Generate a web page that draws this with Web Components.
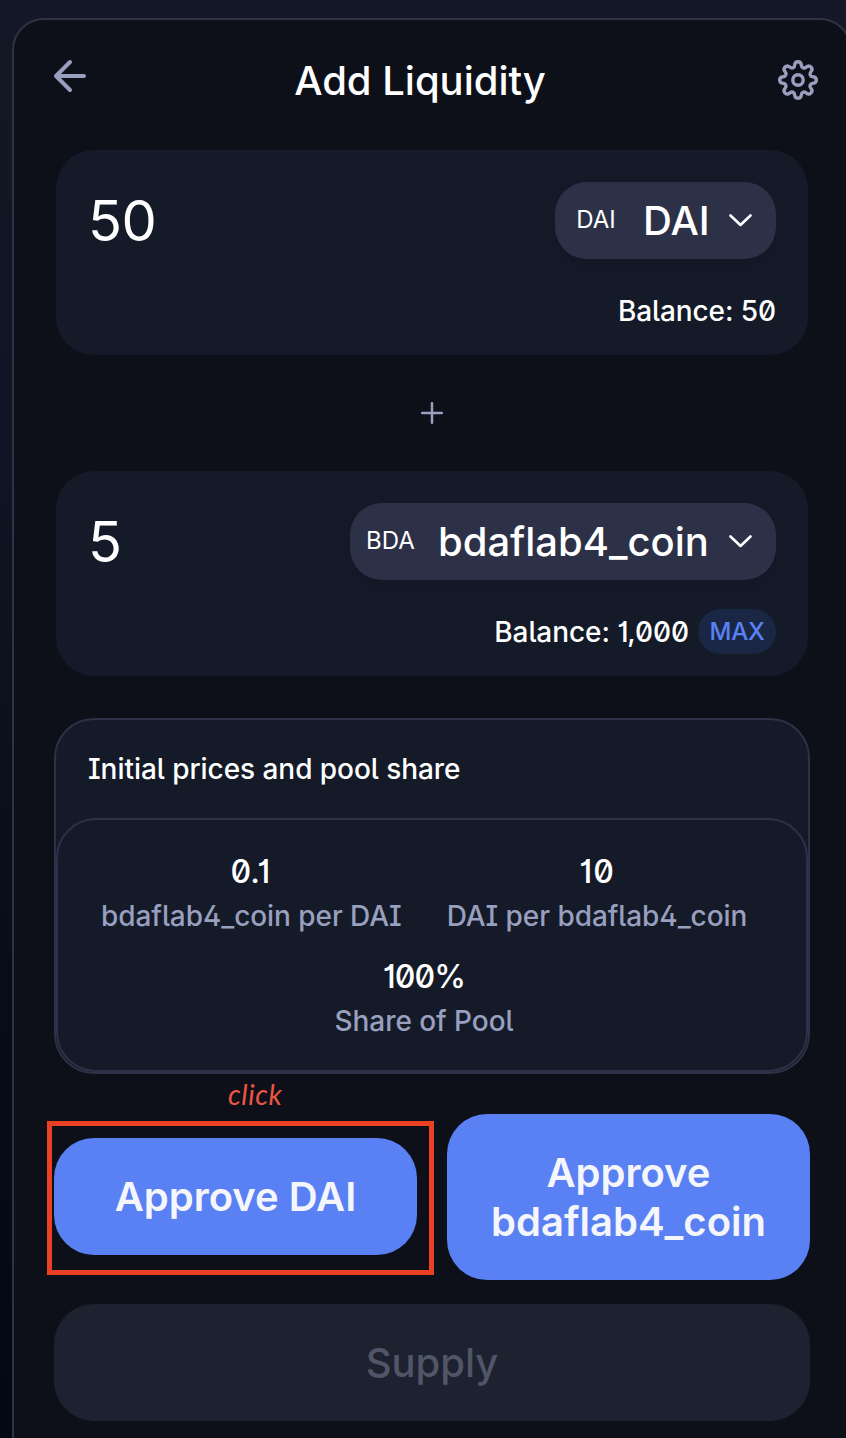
<!DOCTYPE html>
<html lang="en">
<head>
<meta charset="utf-8">
<title>Add Liquidity</title>
<style>
html,body{margin:0;height:1438px;overflow:hidden}
body{background:linear-gradient(180deg,#141726 0,#111424 30%,#080b18 70%,#040714 100%);font-family:Inter,"Liberation Sans",sans-serif;color:#fff;font-weight:500}
</style>
</head>
<body>
<liquidity-card></liquidity-card>
<script>
const define=(name,html)=>customElements.define(name,class extends HTMLElement{
  constructor(){super();this.attachShadow({mode:'open'}).innerHTML=html;}
});

define('card-header',`<style>
:host{display:flex;justify-content:space-between;height:128px;padding:0 32px 0 40px;box-sizing:border-box}
h1{margin:36px 32px 0 0;font:inherit;font-size:40px;line-height:50px;white-space:nowrap;letter-spacing:-.02px}
.back{margin-top:40px;width:32px;height:32px}.gear{margin-top:40px;width:40px;height:40px}
.left{width:40px}
svg{display:block;overflow:visible}
</style>
<div class="left"><svg class="back" viewBox="0 0 32 32" fill="none" stroke="#999fbe" stroke-width="4" stroke-linecap="round" stroke-linejoin="round"><path d="M30 16H2M16 2L2 16L16 30"/></svg></div>
<h1><slot></slot></h1>
<svg class="gear" viewBox="-20 -20 40 40" fill="none" stroke="#999fbe" stroke-width="3.4"><circle r="5.2"/><path id="g" stroke-linejoin="round"/></svg>`);

define('token-picker',`<style>
:host{display:flex;align-items:center;height:77px;border-radius:32px;background:#2c3147;box-shadow:0 8px 20px rgba(0,0,0,.09);box-sizing:border-box;padding:0 24px 0 16px;flex:none}
.sym{font-size:24px;font-weight:400;width:48px;text-align:center;line-height:30px;margin-top:-2px}
.name{font-size:40px;line-height:50px;margin:0 auto 0 24px;letter-spacing:-.02px}
svg{display:block;flex:none}
</style>
<span class="sym"><slot name="symbol"></slot></span><span class="name"><slot></slot></span>
<svg width="23" height="13" viewBox="0 0 23 13" fill="none" stroke="#fff" stroke-width="2.6" stroke-linecap="round" stroke-linejoin="round"><path d="M1.5 1.5L11.5 11L21.5 1.5"/></svg>`);

define('currency-panel',`<style>
:host{display:flex;flex-direction:column;height:205px;margin:0 42px;padding:32px;box-sizing:border-box;border-radius:38px;background:#141a28}
.row{display:flex;justify-content:space-between;align-items:center;flex:none;height:77px}
.amount{font-size:56px;font-weight:400;line-height:70px;letter-spacing:-.6px}
.balance{flex:none;display:flex;justify-content:flex-end;align-items:center;gap:9px;font-size:28px;line-height:34px;height:45px;margin-top:29px;letter-spacing:-.08px;font-feature-settings:"ss01","ss02","cv01","cv03"}
</style>
<div class="row"><span class="amount"><slot name="amount"></slot></span><slot name="token"></slot></div>
<div class="balance"><span><slot></slot></span><slot name="action"></slot></div>`);

define('max-button',`<style>
:host{display:block;width:78px;height:45px;border-radius:24px;background:#1a2744;color:#5981f3;font-size:24px;line-height:46px;text-align:center;letter-spacing:-.3px;font-feature-settings:normal}
</style><slot></slot>`);

define('plus-mark',`<style>:host{display:flex;justify-content:center;align-items:center;height:116px}</style>
<svg width="22" height="22" viewBox="0 0 22 22" stroke="#999fbe" stroke-width="2.5" stroke-linecap="round"><path d="M11 1.2V20.8M1.2 11H20.8"/></svg>`);

define('price-stat',`<style>
:host{display:flex;flex-direction:column;align-items:center;white-space:nowrap}
.v{font-size:32px;line-height:40px;margin-right:var(--value-shift,2px);letter-spacing:var(--value-spacing,0)}
.l{font-size:28px;line-height:35px;margin-top:7px;color:#999fbe;letter-spacing:-.06px}
</style><span class="v"><slot name="value"></slot></span><span class="l"><slot></slot></span>`);

define('pool-summary',`<style>
:host{display:block;height:356px;margin:42px 40px 0;box-sizing:border-box;border:2px solid #2c3147;border-radius:40px;background:#141a28;font-feature-settings:"ss01","ss02","cv01","cv03"}
.title{height:98px;box-sizing:border-box;padding:32px 32px 0;font-size:28px;line-height:35px;letter-spacing:-.05px}
.box{height:254px;box-sizing:border-box;border:2px solid #2c3147;border-radius:40px;padding:32px 43px}
.pair{display:flex;gap:45px;margin-bottom:23px}
.total{margin-right:16px}
</style>
<div class="title"><slot></slot></div>
<div class="box"><div class="pair"><slot name="pair"></slot></div><div class="total"><slot name="total"></slot></div></div>`);

define('action-button',`<style>
:host{display:flex;align-items:center;justify-content:center;text-align:center;box-sizing:border-box;min-height:117px;padding:34px 32px;border-radius:40px;background:#5981f3;color:#f5f6fc;font-size:40px;font-weight:600;line-height:49px}
:host([disabled]){background:#1c222f;color:#505568;font-weight:500}
</style><span><slot></slot></span>`);

define('click-note',`<style>
:host{display:block;position:absolute;left:-7px;top:-17px;width:387px;height:154px;box-sizing:border-box;border:5px solid #ec4024;pointer-events:none}
span{position:absolute;left:176px;top:-50px;font-family:Lato,sans-serif;font-style:italic;font-weight:400;font-size:28px;letter-spacing:.6px;line-height:36px;color:#ee5544;white-space:nowrap}
</style><span><slot></slot></span>`);

define('liquidity-card',`<style>
:host{display:flow-root;width:840px;height:1460px;margin:18px 0 0 12px;box-sizing:border-box;border:2px solid #30323f;border-radius:32px;background:#0d1019}
.actions{display:grid;grid-template-columns:363px 363px;gap:30px;align-items:start;margin:40px 40px 24px}
.marked{position:relative;margin-top:24px}
.supply{margin:0 40px}
.top{margin-bottom:2px}
.short{padding-left:2px}
</style>
<card-header class="top">Add Liquidity</card-header>
<currency-panel><span slot="amount">50</span><token-picker slot="token" style="width:221px"><span slot="symbol" class="short">DAI</span>DAI</token-picker>Balance: 50</currency-panel>
<plus-mark></plus-mark>
<currency-panel><span slot="amount">5</span><token-picker slot="token" style="width:426px"><span slot="symbol">BDA</span>bdaflab4_coin</token-picker>Balance: 1,000<max-button slot="action">MAX</max-button></currency-panel>
<pool-summary>Initial prices and pool share
<price-stat slot="pair"><span slot="value">0.1</span>bdaflab4_coin per DAI</price-stat>
<price-stat slot="pair" style="--value-spacing:1px;--value-shift:0px"><span slot="value">10</span>DAI per bdaflab4_coin</price-stat>
<price-stat slot="total" style="--value-spacing:-.9px;--value-shift:0px"><span slot="value">100%</span>Share of Pool</price-stat></pool-summary>
<div class="actions"><div class="marked"><action-button>Approve DAI</action-button><click-note>click</click-note></div><action-button>Approve bdaflab4_coin</action-button></div>
<action-button class="supply" disabled>Supply</action-button>`);

/* Gear outline: eight rounded teeth, every tooth rotated by 45 degrees. */
const root=document.querySelector('liquidity-card').shadowRoot.querySelector('card-header').shadowRoot;
const rot=(x,y,a)=>{const r=a*Math.PI/180,c=Math.cos(r),s=Math.sin(r);return (x*c-y*s).toFixed(2)+' '+(x*s+y*c).toFixed(2);};
let d='M'+rot(-3.3,-15,0);
for(let i=0;i<8;i++){const a=i*45,p=(x,y)=>rot(x,y,a);
 d+=`C${p(-3,-19.4)} ${p(3,-19.4)} ${p(3.3,-15)}C${p(3.6,-12)} ${p(6.3,-11)} ${rot(-3.3,-15,a+45)}`;}
root.querySelector('#g').setAttribute('d',d+'Z');
</script>
</body>
</html>
